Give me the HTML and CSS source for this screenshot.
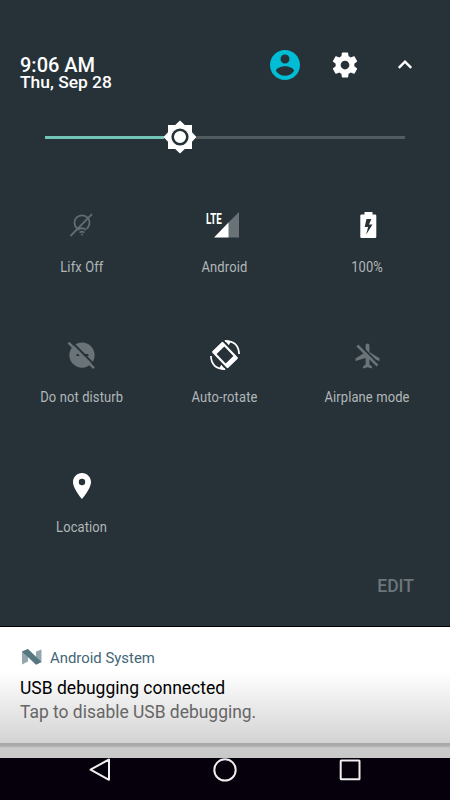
FILE: index.html
```html
<!DOCTYPE html>
<html lang="en">
<head>
<meta charset="utf-8">
<title>Quick settings</title>
<link rel="stylesheet" href="styles.css">
</head>
<body>
<main class="screen">
  <section class="panel">
    <header class="header">
      <div class="clock"><div class="time">9:06 AM</div><div class="date">Thu, Sep 28</div></div>
      <div class="actions">
        <svg class="user" viewBox="2 2 20 20"><path fill="#00bcd4" d="M12 2C6.480 2 2 6.480 2 12s4.480 10 10 10 10-4.480 10-10S17.520 2 12 2zm0 3c1.660 0 3 1.340 3 3s-1.340 3-3 3-3-1.340-3-3 1.340-3 3-3zm0 14.200c-2.500 0-4.710-1.280-6-3.220.03-1.990 4-3.080 6-3.080 1.990 0 5.970 1.090 6 3.080-1.290 1.940-3.500 3.220-6 3.220z"/></svg>
        <svg class="gear" viewBox="0 0 24 24"><path fill="#fff" d="M19.430 12.980c.04-.32.07-.64.07-.98s-.03-.66-.07-.98l2.110-1.650c.19-.15.24-.42.12-.64l-2-3.460c-.12-.22-.39-.3-.61-.22l-2.490 1c-.52-.4-1.080-.73-1.690-.98l-.38-2.650C14.460 2.180 14.250 2 14 2h-4c-.25 0-.46.18-.49.42l-.38 2.650c-.61.25-1.170.59-1.690.98l-2.490-1c-.23-.09-.49 0-.61.22l-2 3.460c-.13.22-.07.49.12.64l2.110 1.650c-.04.32-.07.65-.07.98s.03.66.07.98l-2.110 1.650c-.19.15-.24.42-.12.64l2 3.460c.12.22.39.3.61.22l2.490-1c.52.4 1.080.73 1.690.98l.38 2.650c.03.24.24.42.49.42h4c.25 0 .46-.18.49-.42l.38-2.650c.61-.25 1.170-.59 1.690-.98l2.490 1c.23.09.49 0 .61-.22l2-3.460c.12-.22.07-.49-.12-.64l-2.110-1.650zM12 15.500c-1.930 0-3.500-1.570-3.500-3.500s1.570-3.500 3.500-3.500 3.500 1.570 3.500 3.500-1.570 3.500-3.500 3.500z"/></svg>
        <svg class="chevron" viewBox="0 0 16 10"><path fill="none" stroke="#fff" stroke-width="2.400" d="M1.800 7.900 8 1.700l6.200 6.200"/></svg>
      </div>
    </header>
    <div class="slider">
      <div class="filled"></div>
      <svg class="thumb" viewBox="0 0 34 34"><path fill="#fff" d="M17 .5 21.800 5H29v7.200l4.500 4.800-4.500 4.800V29h-7.200L17 33.500 12.200 29H5v-7.200L.5 17 5 12.200V5h7.200z"/><circle cx="17" cy="17" r="7.300" fill="#fff" stroke="#263238" stroke-width="2.600"/></svg>
      <div class="rest"></div>
    </div>
    <div class="tiles">
      <div class="tile"><svg viewBox="0 0 30 30" fill="none" stroke="#636c71" stroke-width="1.800"><path d="M10.400 18.700a7.500 7.500 0 1 1 9.200 0M3.500 26 25 4.200M10.800 20q4-3.400 8.400 0M12.600 22.600q2.400-1.900 4.800 0"/><circle cx="15" cy="24.400" r="1" fill="#636c71" stroke="none"/></svg><span class="label">Lifx Off</span></div>
      <div class="tile"><div class="cell"><span class="lte">LTE</span><svg class="signal" viewBox="0 0 26 26"><path fill="#697277" d="M14 11 25 0v25.500H14z"/><path fill="#fff" d="M14.500 10.500v15H0z"/></svg></div><span class="label">Android</span></div>
      <div class="tile"><svg viewBox="0 0 30 30"><path fill="#fff" fill-rule="evenodd" d="M11.500 2h8v2.500H22q1.300 0 1.300 1.300v21q0 1.200-1.300 1.200H8.500q-1.200 0-1.200-1.200v-21q0-1.300 1.200-1.300h3zM13.500 9l-1.800 8h3.400l-1.900 7.500L19.500 14.600H16L18.300 9z"/></svg><span class="label">100%</span></div>
      <div class="tile"><svg viewBox="0 0 30 30"><circle cx="15" cy="15.200" r="12.600" fill="#6a7377"/><path fill="#263238" d="M9.500 14h12v2h-12z"/><path fill="#6a7377" d="M12.500 13.500h4v3h-4z"/><path stroke="#263238" stroke-width="2" d="M4 1.300 29.500 26.800"/><path stroke="#6a7377" stroke-width="2.500" d="M1.500 2.600 27 28.100"/></svg><span class="label">Do not disturb</span></div>
      <div class="tile"><svg viewBox="0 0 30 30" fill="none" stroke="#fff"><path stroke-width="2.200" stroke-linejoin="round" d="M3.200 12 12.500 3 26.800 18 17.500 27z"/><path stroke-width="4.600" d="m4.200 13.100 9.300-9M16.500 25.900l9.300-9"/><path stroke-width="1.700" d="M15 .9Q28.500 1 29.100 14M.9 16Q1.500 29 15 29.100"/><path fill="#fff" stroke="none" d="M14.200.1 20.700 1.700 18.800 5.200zM15.800 29.900 9.300 28.300l1.900-3.500z"/></svg><span class="label">Auto-rotate</span></div>
      <div class="tile"><svg viewBox="0 0 30 30"><path fill="#6a7377" d="M12.600 12V5.300a1.900 1.900 0 0 1 3.800 0V12L26.500 18.300v2.700l-10.100-3v6.500l2.600 2v2l-4.500-1.300-4.500 1.300v-2l2.600-2V18l-10.100 3v-2.500z"/><path stroke="#263238" stroke-width="2" d="M6 4.100 27.500 25.600"/><path stroke="#6a7377" stroke-width="2.500" d="M4.300 5.500 24.500 25.700"/></svg><span class="label">Airplane mode</span></div>
      <div class="tile"><svg viewBox="0 0 30 30"><path fill="#fff" fill-rule="evenodd" d="M15 3c-5 0-9 4-9 9 0 6.700 9 17 9 17s9-10.300 9-17c0-5-4-9-9-9zm0 12.200a3.200 3.200 0 1 1 0-6.400 3.200 3.200 0 0 1 0 6.400z"/></svg><span class="label">Location</span></div>
    </div>
    <div class="edit">EDIT</div>
  </section>
  <section class="notification">
    <div class="app"><svg class="nougat" viewBox="0 0 20 16"><path fill="#94a7af" d="M0 2.500 6 0v12.500L0 15.500z"/><path fill="#94a7af" d="m14 2.500 5.500-2V13L14 15.500z"/><path fill="#567682" d="M0 2.500 6 0l13.500 13-5.500 2.800z"/></svg><span>Android System</span></div>
    <div class="title">USB debugging connected</div>
    <div class="body">Tap to disable USB debugging.</div>
  </section>
  <div class="shelf"></div>
  <nav class="nav">
    <svg viewBox="0 0 24 24"><path d="M21 1.500v20.300L2.500 11.700z"/></svg>
    <svg viewBox="0 0 24 24"><circle cx="12" cy="11.900" r="10.700"/></svg>
    <svg viewBox="0 0 24 24"><rect x="2.700" y="2.500" width="18.800" height="18.800" rx=".5"/></svg>
  </nav>
</main>
</body>
</html>
```

FILE: styles.css
```css
* { box-sizing: border-box; }
body { margin: 0; font-family: Roboto, "Liberation Sans", sans-serif; }
svg { display: block; flex: none; }
.screen { width: 450px; height: 800px; overflow: hidden; display: flex; flex-direction: column; background: #05000b; }
.panel { height: 627px; background: #263238; border-bottom: 1px solid #000; flex: none; }
.header { height: 120px; display: flex; justify-content: space-between; padding: 50px 37px 0 20px; color: #fff; }
.clock { padding-top: 6px; font-weight: 500; white-space: nowrap; }
.time { font-size: 20px; line-height: 18px; }
.date { font-size: 17.400px; line-height: 16px; }
.actions { display: flex; align-items: center; height: 30px; }
.user { width: 30px; height: 30px; margin-right: 30px; }
.gear { width: 30px; height: 30px; margin-right: 37px; }
.chevron { width: 16px; height: 10px; }
.slider { height: 34px; padding: 0 45px; display: flex; align-items: center; }
.filled { width: 119px; height: 3px; background: #71c4b7; }
.thumb { width: 34px; height: 34px; margin: 0 -1px; }
.rest { flex: 1; height: 3px; background: #515b60; }
.tiles { display: grid; grid-template-columns: repeat(3, 143px); grid-auto-rows: 130px; padding: 56px 10px 0; height: 422px; }
.tile { display: flex; flex-direction: column; align-items: center; }
.tile > svg { width: 30px; height: 30px; }
.label { margin-top: 18px; font-size: 15.500px; line-height: 18px; color: #b2b7b9; white-space: nowrap; transform: scaleX(.835); letter-spacing: .15px; }
.cell { width: 38px; height: 30px; display: flex; }
.lte { width: 8px; color: #fff; font-size: 14px; line-height: 18px; font-weight: 700; transform: scaleX(.7); transform-origin: 0 0; }
.signal { width: 26px; height: 26px; margin-top: 2px; }
.edit { padding-right: 36px; text-align: right; font-size: 17.500px; line-height: 20px; font-weight: 500; color: #6d767b; }
.notification { flex: none; height: 116px; padding: 21px 20px 0; background: linear-gradient(#fff 45px, #d3d3d3); }
.app { display: flex; align-items: center; height: 20px; font-size: 14.900px; color: #426676; }
.nougat { width: 20px; height: 16px; margin: 0 8px 2px 2px; }
.title { margin-top: 8px; font-size: 17.500px; line-height: 24px; color: #000; }
.body { font-size: 17.450px; line-height: 25px; color: #666; }
.shelf { flex: none; height: 15px; background: linear-gradient(#a6a6a6, #adadad 3px, #cbcbcb 5px, #c8c8c8); }
.nav { display: flex; justify-content: space-around; padding: 0 37px; height: 42px; }
.nav svg { width: 24px; height: 24px; fill: none; stroke: #eee; stroke-width: 2; stroke-linejoin: round; }
```
